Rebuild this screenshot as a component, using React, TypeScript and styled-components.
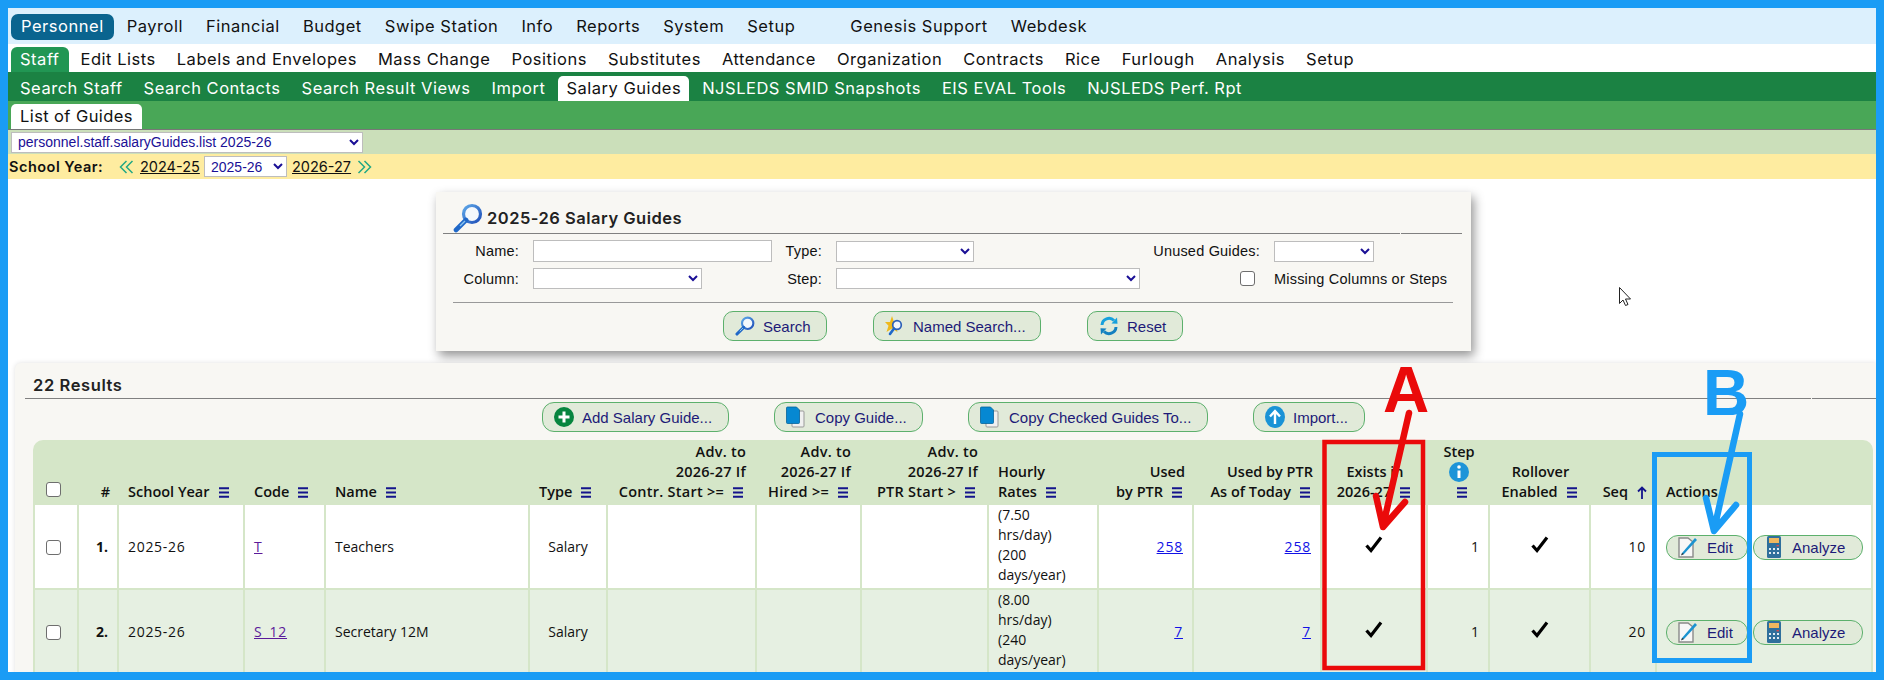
import React from "react";
import styled, { createGlobalStyle } from "styled-components";

const UI = `"Open Sans", "Noto Sans", sans-serif`;
const NAV = `Inter, "Open Sans", sans-serif`;
const FORM = `"Liberation Sans", Arial, sans-serif`;

const Global = createGlobalStyle`
  html, body { margin: 0; padding: 0; background: #fff; overflow: hidden; }
  body { font-family: ${UI}; color: #111; }
`;

const Frame = styled.div`
  position: relative; box-sizing: border-box; width: 1884px; height: 680px;
  border: 8px solid #1a9cf5; overflow: hidden; background: #fff;
  display: flex; flex-direction: column;
`;
const TopBar = styled.nav`
  height: 35px; background: #dcf0fd; display: flex; align-items: center; gap: 3px; padding: 1px 0 0 3px;
  font: 16.5px ${NAV}; letter-spacing: .52px; flex: none;
`;
const TopItem = styled.a<{ $active?: boolean; $gapLeft?: boolean }>`
  height: 26px; line-height: 25px; padding: 0 10px; border-radius: 7px; color: ${p => (p.$active ? "#fff" : "#111")};
  background: ${p => (p.$active ? "#0a648f" : "transparent")};
  margin-left: ${p => (p.$gapLeft ? "32px" : "0")};
`;
const SubBar = styled.nav`
  height: 28px; background: #fff; display: flex; align-items: flex-end; gap: 3px; padding-left: 3px;
  font: 16.5px ${NAV}; letter-spacing: .52px; flex: none;
`;
const SubItem = styled.a<{ $active?: boolean }>`
  height: 25px; line-height: 24px; padding: 0 9px; border-radius: 6px 6px 0 0;
  color: ${p => (p.$active ? "#fff" : "#111")}; background: ${p => (p.$active ? "#219653" : "transparent")};
`;
const ThirdBar = styled.nav`
  height: 29px; background: #1b8243; display: flex; align-items: flex-end; gap: 5px; padding-left: 4px;
  font: 16.5px ${NAV}; letter-spacing: .52px; flex: none;
`;
const ThirdItem = styled.a<{ $active?: boolean }>`
  height: 25px; line-height: 24px; padding: 0 8px; border-radius: 5px 5px 0 0;
  color: ${p => (p.$active ? "#111" : "#fff")}; background: ${p => (p.$active ? "#fff" : "transparent")};
`;
const FourthBar = styled.nav`
  height: 28px; box-sizing: content-box; background: #49a757; border-bottom: 1px solid #777; display: flex; align-items: flex-end;
  padding-left: 3px; font: 16.5px ${NAV}; letter-spacing: .4px; flex: none;
`;
const FourthItem = styled.a`
  height: 25px; line-height: 24px; padding: 0 9px; background: #fff; color: #111; border-radius: 5px 5px 0 0;
`;
const PathBar = styled.div`
  height: 24px; background: #cbdfba; display: flex; align-items: center; padding-left: 3px; flex: none;
`;
const NativeSelect = styled.select<{ $w: number; $h?: number }>`
  width: ${p => p.$w}px; height: ${p => p.$h ?? 21}px; box-sizing: border-box; background: #fff; color: #1a0f96;
  border: 1px solid #bdbdbd; border-radius: 0; font: 14px ${FORM}; padding: 0 0 0 2px; margin: 0; flex: none;
`;
const YearBar = styled.div`
  height: 25px; background: #feeca0; display: flex; align-items: center; flex: none; padding-left: 1px;
  font: 14.5px ${NAV};
`;
const YearLabel = styled.b`
  font-weight: 600; width: 110px; flex: none; letter-spacing: .5px;
`;
const YearLink = styled.a`
  color: #111; text-decoration: underline; margin: 0 5px; width: 60px; flex: none;
`;
const YearSelect = styled(NativeSelect)`
  margin-left: -1px;
`;
const Chevrons = styled.svg`
  width: 15px; height: 14px; flex: none; margin-right: 1px;
`;
const SearchPanel = styled.section`
  flex: none; width: 1035px; height: 159px; margin: 13px 0 0 428px; box-sizing: border-box;
  background: #f8f7f3; box-shadow: 3px 5px 10px rgba(0, 0, 0, .42); padding: 0 9px 0 0;
  display: flex; flex-direction: column;
`;
const PanelHead = styled.div`
  position: relative; height: 41px; margin-left: 7px; display: flex; align-items: flex-end; gap: 4px;
  border-bottom: 1px solid #808080; padding-left: 10px; box-sizing: content-box;
  &::after { content: ""; position: absolute; left: 957px; bottom: -1px; width: 1px; height: 1px; background: #f8f7f3; }
`;
const PanelTitle = styled.h2`
  margin: 0 0 5px; font: 600 16.5px ${NAV}; color: #222; letter-spacing: .5px;
`;
const FieldGrid = styled.div`
  display: grid; grid-template-columns: 83px 239px 36px 304px 106px 1fr; column-gap: 14px;
  grid-template-rows: 22px 21px; row-gap: 6px; margin-top: 6px; align-items: center;
`;
const FieldLabel = styled.label`
  justify-self: end; white-space: nowrap; font: 14.5px ${FORM}; color: #111; letter-spacing: .2px;
`;
const TextBox = styled.input`
  width: 239px; height: 22px; box-sizing: border-box; background: #fff; border: 1px solid #bdbdbd; padding: 0; margin: 0;
`;
const Check = styled.input.attrs({ type: "checkbox" })`
  appearance: none; width: 15px; height: 15px; box-sizing: border-box; margin: 0; background: #fff;
  border: 1px solid #6e6e6e; border-radius: 3px; vertical-align: middle;
`;
const HeadCheck = styled(Check)`
  margin-bottom: 5px;
`;
const CheckRight = styled(Check)`
  justify-self: end; margin-right: 5px;
`;
const PlainText = styled.span`
  font: 14.5px ${FORM}; color: #111; white-space: nowrap; letter-spacing: .2px;
`;
const FormRule = styled.hr`
  border: 0; border-top: 1px solid #999; margin: 13px 9px 0 17px; height: 0; width: 1000px;
`;
const ButtonRow = styled.div<{ $pad: number; $gap?: number }>`
  display: flex; align-items: center; margin-top: 8px; padding-left: ${p => p.$pad}px; gap: ${p => p.$gap ?? 46}px;
`;
const Pill = styled.button<{ $w: number; $h?: number; $r?: number; $gap?: number; $left?: number }>`
  display: inline-flex; align-items: center; gap: ${p => p.$gap ?? 8}px; box-sizing: border-box; width: ${p => p.$w}px; height: ${p => p.$h ?? 30}px;
  border: 1px solid #5cb06c; border-radius: ${p => p.$r ?? 10}px; background: #e1ead9; color: #1d1a78;
  font: 15px ${FORM}; padding: 0 0 0 ${p => p.$left ?? 11}px; margin: 0; white-space: nowrap; flex: none;
`;
const ResultsPanel = styled.section`
  flex: 1; margin: 12px 0 0 7px; background: #f8f7f3; box-shadow: 0 0 5px rgba(0, 0, 0, .12);
  border-radius: 6px 0 0 0; display: flex; flex-direction: column;
`;
const ResultsHead = styled.div`
  position: relative; height: 35px; margin-left: 10px; border-bottom: 1px solid #808080; padding-left: 8px; display: flex; align-items: flex-end;
  &::after { content: ""; position: absolute; left: 1786px; bottom: -1px; width: 1px; height: 1px; background: #f8f7f3; }
`;
const ResultsTitle = styled.h2`
  margin: 0 0 3px; font: 600 16.5px ${NAV}; color: #222; letter-spacing: .6px;
`;
const ResultsActions = styled.div`
  display: flex; height: 30px; margin-top: 3px; padding-left: 527px; gap: 45px;
`;
const Grid = styled.table`
  margin: 8px 0 0 18px; width: 1840px; table-layout: fixed; border-collapse: separate; border-spacing: 0;
  font-size: 14px; color: #111;
`;
const HeadCell = styled.th<{ $align?: string; $wide?: boolean }>`
  background: #d5e6c8; font-weight: 600; vertical-align: bottom; text-align: ${p => p.$align ?? "left"};
  font-size: 14.5px; line-height: 20px; padding: 0 ${p => (p.$wide ? 11 : 9)}px 3px 9px; white-space: nowrap; height: 62px; color: #111;
  letter-spacing: ${p => (p.$wide ? ".25px" : "0")};
  &:first-child { border-top-left-radius: 10px; padding: 0 0 3px 13px; }
  &:last-child { border-top-right-radius: 10px; }
`;
const Cell = styled.td<{ $align?: string; $even?: boolean }>`
  background: ${p => (p.$even ? "#e6f0e2" : "#fff")}; border-right: 2px solid #d5e6c8; border-bottom: 2px solid #d5e6c8;
  text-align: ${p => p.$align ?? "left"}; height: 83px; padding: 0 9px; line-height: 20px; vertical-align: middle; box-sizing: content-box;
  &:first-child { border-left: 2px solid #d5e6c8; padding: 0 0 0 11px; }
`;
const HourlyCell = styled(Cell)`
  vertical-align: top; white-space: normal;
`;
const NumberText = styled.b`
  font-weight: 700;
`;
const Digits = styled.span`
  letter-spacing: .7px;
`;
const LinkVisited = styled.a`
  color: #5b1a9a; text-decoration: underline; letter-spacing: .8px;
`;
const LinkBlue = styled.a`
  color: #1212e6; text-decoration: underline; letter-spacing: .8px;
`;
const MenuWrap = styled.svg`
  width: 10px; height: 11px; margin: 0 3px 0 9px; vertical-align: -1px;
`;
const SeqArrow = styled.svg`
  width: 10px; height: 13px; margin: 0 1px 0 9px; vertical-align: -2px;
`;
const CheckMark = styled.svg`
  width: 18px; height: 18px; display: block; margin: -6px auto 0;
`;
const ActionRow = styled.div`
  display: flex; gap: 5px; margin-top: 1px;
`;
const AnnotationLayer = styled.svg`
  position: absolute; left: -8px; top: -8px; width: 1884px; height: 680px; pointer-events: none;
`;

const Menu = () => (
  <MenuWrap viewBox="0 0 10 11"><path d="M0 1.200h10M0 5.500h10M0 9.800h10" stroke="#14148c" strokeWidth="2" /></MenuWrap>
);

const Mag = ({ s = 20 }: { s?: number }) => (
  <svg width={s} height={s} viewBox="0 0 30 30">
    <defs>
      <linearGradient id="mg" x1="0" y1="0" x2="1" y2="1"><stop offset="0" stopColor="#5fa8e8" /><stop offset="1" stopColor="#1f4fb8" /></linearGradient>
    </defs>
    <circle cx="19" cy="11" r="8.500" fill="#f4f8fc" stroke="url(#mg)" strokeWidth="3.200" />
    <path d="M13 17 3 27" stroke="#2068c8" strokeWidth="4.600" strokeLinecap="round" />
    <path d="M12 18 7 23" stroke="#8cc4ee" strokeWidth="1.500" />
  </svg>
);
const StarMag = () => (
  <svg width="20" height="22" viewBox="0 0 20 22">
    <path d="M7 1 9 7h6l-4.600 3.800L12.500 17 7 13.400 1.500 17l2-6.200L0 7h5z" fill="#eeb91c" />
    <circle cx="12" cy="10" r="4.300" fill="#f2f6fa" stroke="#2d60b8" strokeWidth="1.700" />
    <path d="M9 13.500 5 19" stroke="#2068c8" strokeWidth="2.600" strokeLinecap="round" />
  </svg>
);
const Refresh = () => (
  <svg width="20" height="20" viewBox="0 0 20 20" fill="none">
    <path d="M3 9a7 7 0 0 1 12-4.500" stroke="#17a0dc" strokeWidth="3" />
    <path d="M12.500 7.500 18.500 7.800 18 1.500z" fill="#17a0dc" />
    <path d="M17 11a7 7 0 0 1-12 4.500" stroke="#1480c0" strokeWidth="3" />
    <path d="M7.500 12.500 1.500 12.200 2 18.500z" fill="#1480c0" />
  </svg>
);
const Plus = () => (
  <svg width="20" height="20" viewBox="0 0 20 20">
    <circle cx="10" cy="10" r="10" fill="#07853f" />
    <path d="M10 4.500v11M4.500 10h11" stroke="#fff" strokeWidth="3" />
  </svg>
);
const Copy = () => (
  <svg width="20" height="22" viewBox="0 0 20 22">
    <path d="M6 5h11a1 1 0 0 1 1 1v14a1 1 0 0 1-1 1H7a1 1 0 0 1-1-1z" fill="#f0f0f0" stroke="#999" />
    <path d="M1.500 1h9l3 3v12.500a1 1 0 0 1-1 1h-11a1 1 0 0 1-1-1V2a1 1 0 0 1 1-1z" fill="#0688d2" stroke="#05639b" strokeWidth=".8" />
  </svg>
);
const UpCircle = () => (
  <svg width="20" height="22" viewBox="0 0 20 22">
    <ellipse cx="10" cy="11" rx="10" ry="11" fill="#1a93d6" />
    <path d="M10 18V6M5 10.500 10 5l5 5.500" stroke="#fff" strokeWidth="2.400" fill="none" />
  </svg>
);
const InfoCircle = () => (
  <svg width="20" height="20" viewBox="0 0 20 20" style={{ display: "block", margin: "0 auto" }}>
    <circle cx="10" cy="10" r="10" fill="#1e94d8" />
    <circle cx="10" cy="5" r="1.800" fill="#fff" />
    <path d="M10 8.500v7.500" stroke="#fff" strokeWidth="3" />
  </svg>
);
const EditIcon = () => (
  <svg width="20" height="21" viewBox="0 0 20 21">
    <path d="M1 1h9l5 4v15H1z" fill="#f7f7f7" stroke="#8a8a8a" strokeWidth="1.400" />
    <path d="M4 16 17 1l2 2L6 17l-2.500 1z" fill="#1b93d0" />
    <path d="M3 18.500l1-2.500 2 1z" fill="#333" />
  </svg>
);
const CalcIcon = () => (
  <svg width="14" height="22" viewBox="0 0 14 22">
    <rect width="14" height="22" rx="1.500" fill="#2f6f9c" />
    <rect x="2" y="2" width="10" height="5" fill="#f0b860" />
    <path d="M2 12h2v2H2zM6 12h2v2H6zM10 12h2v2h-2zM2 16h2v2H2zM6 16h2v2H6zM10 16h2v2h-2z" fill="#dfeaf2" />
    <rect x="9.500" y="9" width="2.400" height="1.400" fill="#d84a4a" />
  </svg>
);
const Tick = () => (
  <CheckMark viewBox="0 0 18 18"><path d="M1.500 10.500 6 15.500 16 2.500" stroke="#000" strokeWidth="3.200" fill="none" /></CheckMark>
);
const DoubleLeft = () => (
  <Chevrons viewBox="0 0 15 14"><path d="M7.500 1 1.500 7l6 6M13.500 1l-6 6 6 6" stroke="#22a884" strokeWidth="1.500" fill="none" /></Chevrons>
);
const DoubleRight = () => (
  <Chevrons viewBox="0 0 15 14"><path d="M1.500 1l6 6-6 6M7.500 1l6 6-6 6" stroke="#22a884" strokeWidth="1.500" fill="none" /></Chevrons>
);

const top = ["Payroll", "Financial", "Budget", "Swipe Station", "Info", "Reports", "System", "Setup"];
const sub = ["Edit Lists", "Labels and Envelopes", "Mass Change", "Positions", "Substitutes", "Attendance", "Organization", "Contracts", "Rice", "Furlough", "Analysis", "Setup"];
const third = ["Search Staff", "Search Contacts", "Search Result Views", "Import"];
const thirdAfter = ["NJSLEDS SMID Snapshots", "EIS EVAL Tools", "NJSLEDS Perf. Rpt"];
const cols = [46, 40, 126, 81, 204, 78, 149, 105, 127, 110, 95, 128, 106, 62, 101, 66, 216];

const rows = [
  { n: "1.", code: "T", name: "Teachers", h1: "(7.50", h2: "(200", ptr: "258", seq: "10" },
  { n: "2.", code: "S_12", name: "Secretary 12M", h1: "(8.00", h2: "(240", ptr: "7", seq: "20" },
];

export default function App() {
  return (
    <Frame>
      <Global />
      <TopBar>
        <TopItem $active>Personnel</TopItem>
        {top.map(t => <TopItem key={t}>{t}</TopItem>)}
        <TopItem $gapLeft>Genesis Support</TopItem>
        <TopItem>Webdesk</TopItem>
      </TopBar>
      <SubBar>
        <SubItem $active>Staff</SubItem>
        {sub.map(t => <SubItem key={t}>{t}</SubItem>)}
      </SubBar>
      <ThirdBar>
        {third.map(t => <ThirdItem key={t}>{t}</ThirdItem>)}
        <ThirdItem $active>Salary Guides</ThirdItem>
        {thirdAfter.map(t => <ThirdItem key={t}>{t}</ThirdItem>)}
      </ThirdBar>
      <FourthBar><FourthItem>List of Guides</FourthItem></FourthBar>
      <PathBar>
        <NativeSelect $w={352}><option>personnel.staff.salaryGuides.list 2025-26</option></NativeSelect>
      </PathBar>
      <YearBar>
        <YearLabel>School Year:</YearLabel>
        <DoubleLeft />
        <YearLink>2024-25</YearLink>
        <YearSelect $w={83}><option>2025-26</option></YearSelect>
        <YearLink>2026-27</YearLink>
        <DoubleRight />
      </YearBar>

      <SearchPanel>
        <PanelHead>
          <Mag s={30} />
          <PanelTitle>2025-26 Salary Guides</PanelTitle>
        </PanelHead>
        <FieldGrid>
          <FieldLabel>Name:</FieldLabel>
          <TextBox />
          <FieldLabel>Type:</FieldLabel>
          <NativeSelect $w={138} />
          <FieldLabel>Unused Guides:</FieldLabel>
          <NativeSelect $w={100} />
          <FieldLabel>Column:</FieldLabel>
          <NativeSelect $w={169} />
          <FieldLabel>Step:</FieldLabel>
          <NativeSelect $w={304} />
          <CheckRight />
          <PlainText>Missing Columns or Steps</PlainText>
        </FieldGrid>
        <FormRule />
        <ButtonRow $pad={287}>
          <Pill $w={104}><Mag />Search</Pill>
          <Pill $w={168}><StarMag />Named Search...</Pill>
          <Pill $w={96}><Refresh />Reset</Pill>
        </ButtonRow>
      </SearchPanel>

      <ResultsPanel>
        <ResultsHead><ResultsTitle>22 Results</ResultsTitle></ResultsHead>
        <ResultsActions>
          <Pill $w={187} $r={12}><Plus />Add Salary Guide...</Pill>
          <Pill $w={149} $r={12} $gap={9}><Copy />Copy Guide...</Pill>
          <Pill $w={240} $r={12} $gap={9}><Copy />Copy Checked Guides To...</Pill>
          <Pill $w={112} $r={12}><UpCircle />Import...</Pill>
        </ResultsActions>
        <Grid>
          <colgroup>{cols.map((w, i) => <col key={i} width={w} />)}</colgroup>
          <thead>
            <tr>
              <HeadCell><HeadCheck /></HeadCell>
              <HeadCell $align="right">#</HeadCell>
              <HeadCell>School Year<Menu /></HeadCell>
              <HeadCell>Code<Menu /></HeadCell>
              <HeadCell>Name<Menu /></HeadCell>
              <HeadCell>Type<Menu /></HeadCell>
              <HeadCell $align="right" $wide>Adv. to<br />2026-27 If<br />Contr. Start &gt;=<Menu /></HeadCell>
              <HeadCell $align="right" $wide>Adv. to<br />2026-27 If<br />Hired &gt;=<Menu /></HeadCell>
              <HeadCell $align="right" $wide>Adv. to<br />2026-27 If<br />PTR Start &gt;<Menu /></HeadCell>
              <HeadCell>Hourly<br />Rates<Menu /></HeadCell>
              <HeadCell $align="right">Used<br />by PTR<Menu /></HeadCell>
              <HeadCell $align="right">Used by PTR<br />As of Today<Menu /></HeadCell>
              <HeadCell $align="center">Exists in<br />2026-27<Menu /></HeadCell>
              <HeadCell $align="center">Step<InfoCircle /><Menu /></HeadCell>
              <HeadCell $align="center">Rollover<br />Enabled<Menu /></HeadCell>
              <HeadCell $align="right">Seq<SeqArrow viewBox="0 0 10 13"><path d="M5 13V2M1 5.500 5 1.500l4 4" stroke="#14148c" strokeWidth="1.800" fill="none" /></SeqArrow></HeadCell>
              <HeadCell>Actions</HeadCell>
            </tr>
          </thead>
          <tbody>
            {rows.map((r, i) => {
              const even = i % 2 === 1;
              return (
                <tr key={r.n}>
                  <Cell $even={even}><Check /></Cell>
                  <Cell $even={even} $align="right"><NumberText>{r.n}</NumberText></Cell>
                  <Cell $even={even}><Digits>2025-26</Digits></Cell>
                  <Cell $even={even}><LinkVisited>{r.code}</LinkVisited></Cell>
                  <Cell $even={even}>{r.name}</Cell>
                  <Cell $even={even} $align="center">Salary</Cell>
                  <Cell $even={even} />
                  <Cell $even={even} />
                  <Cell $even={even} />
                  <HourlyCell $even={even}>{r.h1}<br />hrs/day)<br />{r.h2}<br />days/year)</HourlyCell>
                  <Cell $even={even} $align="right"><LinkBlue>{r.ptr}</LinkBlue></Cell>
                  <Cell $even={even} $align="right"><LinkBlue>{r.ptr}</LinkBlue></Cell>
                  <Cell $even={even}><Tick /></Cell>
                  <Cell $even={even} $align="right">1</Cell>
                  <Cell $even={even}><Tick /></Cell>
                  <Cell $even={even} $align="right"><Digits>{r.seq}</Digits></Cell>
                  <Cell $even={even}>
                    <ActionRow>
                      <Pill $w={82} $h={25} $r={12} $gap={9}><EditIcon />Edit</Pill>
                      <Pill $w={110} $h={25} $r={12} $gap={11} $left={13}><CalcIcon />Analyze</Pill>
                    </ActionRow>
                  </Cell>
                </tr>
              );
            })}
          </tbody>
        </Grid>
      </ResultsPanel>

      <AnnotationLayer viewBox="0 0 1884 680">
        <rect x="1324.500" y="442" width="98.500" height="226" fill="none" stroke="#ea0a0a" strokeWidth="4.500" />
        <rect x="1654.500" y="454.500" width="95" height="206" fill="none" stroke="#1a9cf5" strokeWidth="5" />
        <text x="1383" y="412" fontFamily="Liberation Sans" fontWeight="700" fontSize="64" fill="#ea0a0a">A</text>
        <text x="1703" y="415" fontFamily="Liberation Sans" fontWeight="700" fontSize="64" fill="#1a9cf5">B</text>
        <path d="M1409 413 1383 526M1376 496 1383 527 1405 502" fill="none" stroke="#ea0a0a" strokeWidth="6.500" strokeLinecap="round" strokeLinejoin="round" />
        <path d="M1740 414 1714 530M1706 498 1714 531 1736 505" fill="none" stroke="#1a9cf5" strokeWidth="6.500" strokeLinecap="round" strokeLinejoin="round" />
        <path d="M1619.500 287.500v16l3.500-3.500 2.500 5.500 2.500-1-2.500-5.500h5z" fill="#fff" stroke="#222" strokeWidth="1" />
      </AnnotationLayer>
    </Frame>
  );
}
